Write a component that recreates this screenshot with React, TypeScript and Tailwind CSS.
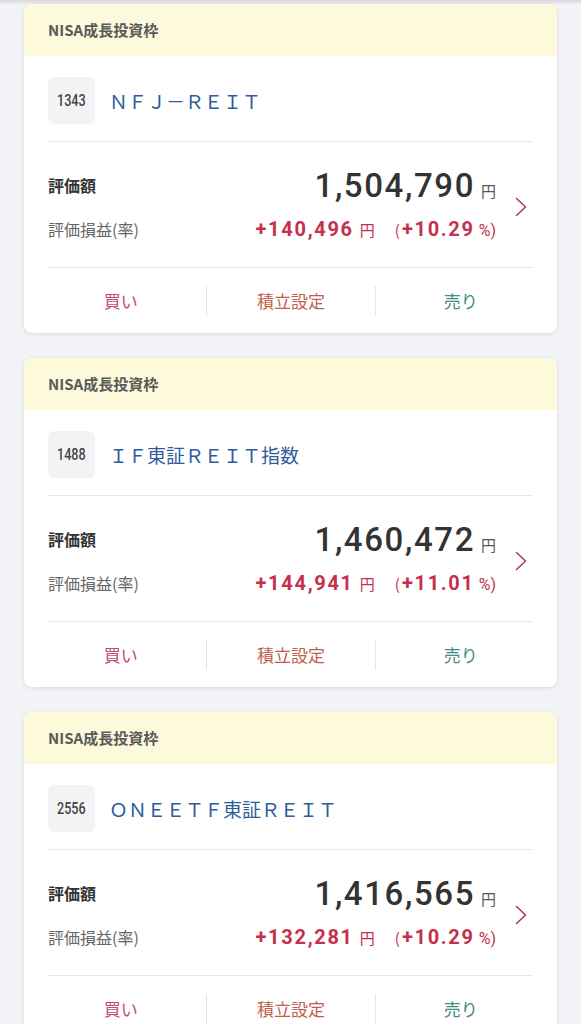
import React from "react";

type Item = {
  code: string;
  name: string;
  value: string;
  gain: string;
  rate: string;
};

const items: Item[] = [
  { code: "1343", name: "ＮＦＪ－ＲＥＩＴ", value: "1,504,790", gain: "+140,496", rate: "+10.29" },
  { code: "1488", name: "ＩＦ東証ＲＥＩＴ指数", value: "1,460,472", gain: "+144,941", rate: "+11.01" },
  { code: "2556", name: "ＯＮＥＥＴＦ東証ＲＥＩＴ", value: "1,416,565", gain: "+132,281", rate: "+10.29" },
];

const jp = "font-['Noto_Sans_CJK_JP',sans-serif]";
const num = "font-['Roboto','Noto_Sans_CJK_JP',sans-serif]";

function Card({ it }: { it: Item }) {
  return (
    <div className="w-[533px] ml-[24px] bg-white rounded-[8px] overflow-hidden shadow-[0_1px_4px_rgba(0,0,0,0.10)]">
      <div className={`h-[52px] bg-[#fcfadb] px-[24px] flex items-center text-[15px] font-bold text-[#5a5a5a] ${jp}`}>
        NISA成長投資枠
      </div>
      <div className="px-[24px]">
        <div className="pt-[21px] pb-[17px] border-b border-[#e8e8ec] flex items-center">
          <div className="w-[47px] h-[47px] rounded-[6px] bg-[#f3f3f6] flex items-center justify-center">
            <span className={`inline-block scale-x-[0.74] text-[17px] leading-none font-medium text-[#444] ${num}`}>{it.code}</span>
          </div>
          <div className={`ml-[14px] text-[19px] leading-none text-[#2f5c9c] ${jp}`}>{it.name}</div>
        </div>
        <div className="pt-[23px] pb-[18px] border-b border-[#e8e8ec] flex items-center">
          <div className="flex-1 flex flex-col gap-[4px]">
            <div className="h-[40px] flex items-center justify-between">
              <span className={`text-[16px] leading-none font-bold text-[#333] ${jp}`}>評価額</span>
              <div className="flex items-baseline">
                <span className={`text-[33px] leading-none font-medium tracking-[1.6px] text-[#333] ${num}`}>{it.value}</span>
                <span className={`ml-[6px] text-[15px] leading-none text-[#555] ${jp}`}>円</span>
              </div>
            </div>
            <div className="h-[40px] flex items-center justify-between">
              <span className={`text-[16px] leading-none text-[#666] ${jp}`}>評価損益(率)</span>
              <div className="flex items-baseline text-[#c5304d]">
                <span className={`text-[20px] leading-none font-bold tracking-[1.7px] ${num}`}>{it.gain}</span>
                <span className={`ml-[6px] text-[15px] leading-none ${jp}`}>円</span>
                <span className={`ml-[20px] text-[15px] leading-none ${jp}`}>(</span>
                <span className={`ml-[2px] text-[20px] leading-none font-bold tracking-[1.7px] ${num}`}>{it.rate}</span>
                <span className={`ml-[4px] text-[16px] leading-none ${num}`}>%)</span>
              </div>
            </div>
          </div>
          <svg className="ml-[19px] mr-[6px] w-[12px] h-[20px]" viewBox="0 0 12 20" fill="none">
            <path d="M1.5 1.5 L10.5 10 L1.5 18.5" stroke="#a83a48" strokeWidth="1.5" strokeLinecap="round" strokeLinejoin="round" />
          </svg>
        </div>
      </div>
      <div className={`h-[65px] px-[12px] grid grid-cols-3 items-center text-[17px] ${jp}`}>
        <div className="h-[30px] flex items-center justify-center text-[#c24d68]">買い</div>
        <div className="h-[30px] flex items-center justify-center border-l border-[#e6e6ea] text-[#c0604c]">積立設定</div>
        <div className="h-[30px] flex items-center justify-center border-l border-[#e6e6ea] text-[#418b83]">売り</div>
      </div>
    </div>
  );
}

export default function App() {
  return (
    <div className="min-h-screen bg-[#f2f3f7] pb-[40px]">
      <div className="h-[4px] bg-gradient-to-b from-[#d9d9dc] to-[#ededf0]" />
      <div className="flex flex-col gap-[25px]">
        {items.map((it) => (
          <Card key={it.code} it={it} />
        ))}
      </div>
    </div>
  );
}
